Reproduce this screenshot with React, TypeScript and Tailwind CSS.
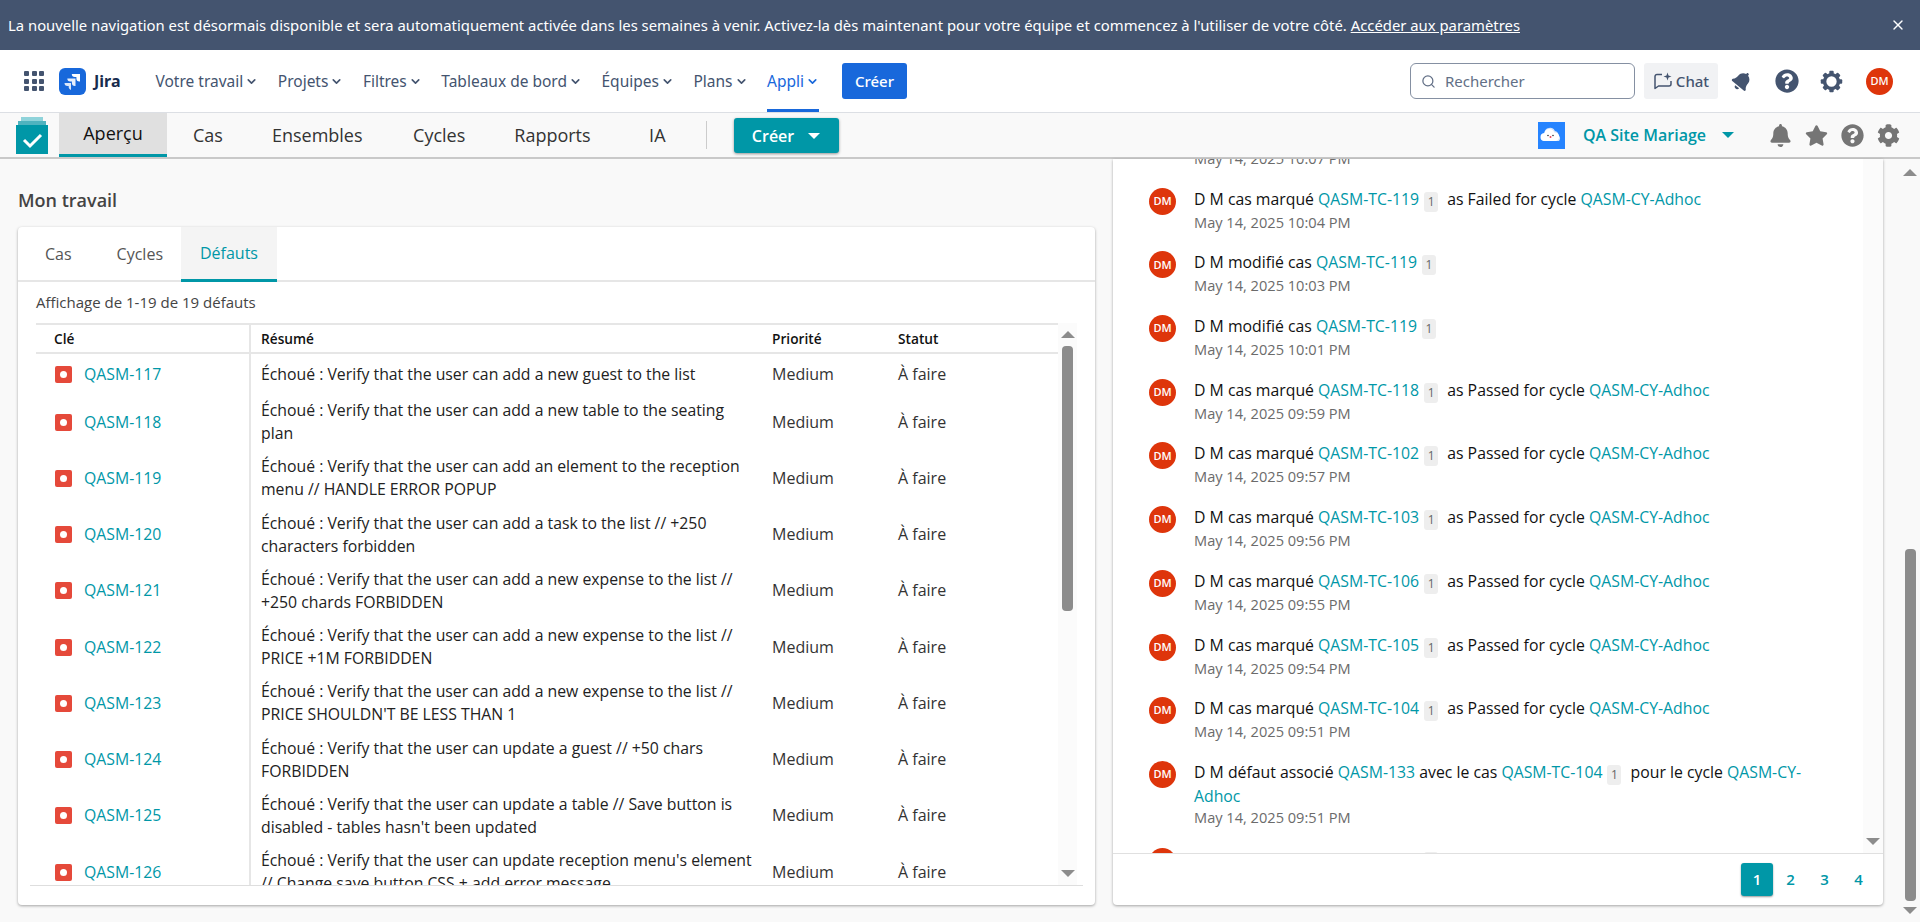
import { ChevronDown, Search, X } from "lucide-react";
import { FaBell, FaCog, FaQuestionCircle, FaStar } from "react-icons/fa";

const navItems = ["Votre travail", "Projets", "Filtres", "Tableaux de bord", "Équipes", "Plans"];

const defects = [
  { key: "QASM-117", text: "Échoué : Verify that the user can add a new guest to the list" },
  { key: "QASM-118", text: "Échoué : Verify that the user can add a new table to the seating plan" },
  { key: "QASM-119", text: "Échoué : Verify that the user can add an element to the reception menu // HANDLE ERROR POPUP" },
  { key: "QASM-120", text: "Échoué : Verify that the user can add a task to the list // +250 characters forbidden" },
  { key: "QASM-121", text: "Échoué : Verify that the user can add a new expense to the list // +250 chards FORBIDDEN" },
  { key: "QASM-122", text: "Échoué : Verify that the user can add a new expense to the list // PRICE +1M FORBIDDEN" },
  { key: "QASM-123", text: "Échoué : Verify that the user can add a new expense to the list // PRICE SHOULDN'T BE LESS THAN 1" },
  { key: "QASM-124", text: "Échoué : Verify that the user can update a guest // +50 chars FORBIDDEN" },
  { key: "QASM-125", text: "Échoué : Verify that the user can update a table // Save button is disabled - tables hasn't been updated" },
  { key: "QASM-126", text: "Échoué : Verify that the user can update reception menu's element // Change save button CSS + add error message" },
];

const marked = [
  { tc: "QASM-TC-118", time: "09:59 PM" },
  { tc: "QASM-TC-102", time: "09:57 PM" },
  { tc: "QASM-TC-103", time: "09:56 PM" },
  { tc: "QASM-TC-106", time: "09:55 PM" },
  { tc: "QASM-TC-105", time: "09:54 PM" },
  { tc: "QASM-TC-104", time: "09:51 PM" },
];

function Link({ children }: { children: React.ReactNode }) {
  return <span className="text-[#0097a7] font-medium">{children}</span>;
}

function Badge() {
  return (
    <span className="inline-block w-[14px] h-[20px] mx-[5px] rounded-[3px] bg-[#eeeeee] text-center text-[12px] leading-[20px] text-[#666] align-[-1px]">
      1
    </span>
  );
}

function Activity({ children, time, height = "h-[63.7px]" }: { children: React.ReactNode; time: string; height?: string }) {
  return (
    <div className={`flex ${height} shrink-0`}>
      <div className="flex h-[27px] w-[27px] shrink-0 items-center justify-center rounded-full bg-[#de350b] text-[11px] font-semibold text-white">
        DM
      </div>
      <div className="ml-[18px] flex-1">
        <div className="text-[15.8px] leading-[22px] text-[#111]">{children}</div>
        <div className="text-[14.6px] leading-[21px] text-[#6b6b6b]">May 14, 2025 {time}</div>
      </div>
    </div>
  );
}

function JiraLogo() {
  return (
    <svg width="27" height="27" viewBox="0 0 27 27">
      <rect width="27" height="27" rx="6" fill="#1868db" />
      <path d="M21 6h-8.2a3 3 0 0 0 3 3h1.6v1.6a3 3 0 0 0 3 3h.6z" fill="#fff" />
      <path d="M16.5 10.5H8.3a3 3 0 0 0 3 3h1.6v1.6a3 3 0 0 0 3 3h.6z" fill="#fff" opacity=".9" />
      <path d="M12 15H5.5a3 3 0 0 0 3 3h1.2v1.6a3 3 0 0 0 2.3 2.4z" fill="#fff" opacity=".85" />
    </svg>
  );
}

function ChatIcon() {
  return (
    <svg width="20" height="20" viewBox="0 0 20 20" fill="none" stroke="#44546f" strokeWidth="1.5">
      <path d="M9 3.5H4a2 2 0 0 0-2 2v12l3.5-2.5H16a2 2 0 0 0 2-2V10" strokeLinejoin="round" />
      <path d="M14.5 1.5l1 3 3 1-3 1-1 3-1-3-3-1 3-1z" fill="#44546f" stroke="none" />
    </svg>
  );
}

function GearIcon() {
  return (
    <svg width="23" height="23" viewBox="0 0 24 24" className="ml-[21px]">
      <circle cx="12" cy="12" r="7.2" fill="none" stroke="#44546f" strokeWidth="3.6" />
      {[0, 45, 90, 135, 180, 225, 270, 315].map((a) => (
        <rect key={a} x="9.7" y="0.8" width="4.6" height="4.6" rx="1" fill="#44546f" transform={`rotate(${a} 12 12)`} />
      ))}
    </svg>
  );
}

function CloudLogo() {
  return (
    <svg width="27" height="27" viewBox="0 0 27 27">
      <rect width="27" height="27" fill="#2684ff" />
      <path d="M7 19a4 4 0 0 1-.6-7.9 5.5 5.5 0 0 1 10.5-2 4.6 4.6 0 0 1 3.6 4.4A3.9 3.9 0 0 1 21 19z" fill="#d6e6fb" />
      <path d="M6.5 19a3.9 3.9 0 0 1-.2-7.8 5.2 5.2 0 0 1 10-.6 4.2 4.2 0 0 1 1.4 8.4z" fill="#fff" />
      <circle cx="10" cy="13.5" r=".8" fill="#333" />
      <circle cx="15" cy="13.5" r=".8" fill="#333" />
      <circle cx="12.5" cy="15" r="1" fill="#f0435a" />
    </svg>
  );
}

function QaLogo() {
  return (
    <svg width="32" height="37" viewBox="0 0 32 37">
      <rect x="5" y="0" width="22" height="4" fill="#8fd3da" />
      <rect x="2" y="4" width="28" height="4" fill="#4fb3bf" />
      <rect x="0" y="8" width="32" height="29" fill="#0097a7" />
      <path d="M8 23l6 6 11-11" fill="none" stroke="#fff" strokeWidth="3" />
    </svg>
  );
}

function ScrollArrow({ up }: { up?: boolean }) {
  return up ? (
    <div className="h-0 w-0 border-x-[7px] border-b-[7px] border-x-transparent border-b-[#8c8c8c]" />
  ) : (
    <div className="h-0 w-0 border-x-[7px] border-t-[7px] border-x-transparent border-t-[#8c8c8c]" />
  );
}

export default function App() {
  return (
    <div className="flex h-[922px] w-full flex-col overflow-hidden bg-[#f9f9f9] font-['Open_Sans',sans-serif]">
      {/* banner */}
      <div className="flex h-[50px] shrink-0 items-center justify-between bg-[#44546f] pl-[8px] pr-[14px] font-['Noto_Sans',sans-serif] text-[14.85px] text-white">
        <div>
          La nouvelle navigation est désormais disponible et sera automatiquement activée dans les semaines à venir. Activez-la dès maintenant pour votre équipe et commencez à l'utiliser de votre côté.{" "}
          <span className="underline">Accéder aux paramètres</span>
        </div>
        <X size={16} />
      </div>

      {/* jira nav */}
      <div className="flex h-[63px] shrink-0 items-center border-b border-[#dcdfe4] bg-white pl-[24px] pr-[27px] font-['Noto_Sans',sans-serif] text-[15.5px] text-[#44546f]">
        <div className="grid grid-cols-3 gap-[2.5px]">
          {Array.from({ length: 9 }).map((_, i) => (
            <div key={i} className="h-[5px] w-[5px] rounded-[1px] bg-[#44546f]" />
          ))}
        </div>
        <div className="ml-[15px]">
          <JiraLogo />
        </div>
        <span className="ml-[8px] text-[16px] font-bold text-[#172b4d]">Jira</span>
        <div className="ml-[35px] flex h-full items-center gap-[19.5px] pt-[1px]">
          {navItems.map((item) => (
            <div key={item} className="flex items-center gap-[2px]">
              {item}
              <ChevronDown size={13} strokeWidth={3} />
            </div>
          ))}
          <div className="flex h-full items-center gap-[2px] border-b-[3px] border-[#1868db] pt-[3px] text-[#1868db]">
            Appli
            <ChevronDown size={13} strokeWidth={3} />
          </div>
        </div>
        <button className="ml-[23px] h-[36px] w-[65px] rounded-[3px] bg-[#1868db] text-[15px] font-medium text-white">Créer</button>
        <div className="ml-auto flex h-[36px] w-[225px] items-center rounded-[6px] border border-[#8590a2] pl-[10px] text-[15px] text-[#626f86]">
          <Search size={15} />
          <span className="ml-[9px]">Rechercher</span>
        </div>
        <div className="ml-[9px] flex h-[36px] w-[74px] items-center justify-center gap-[3px] rounded-[3px] bg-[#f1f2f4] text-[15px] font-medium">
          <ChatIcon />
          Chat
        </div>
        <FaBell size={20} className="ml-[14px] rotate-[40deg]" />
        <FaQuestionCircle size={24} className="ml-[23px]" />
        <GearIcon />
        <div className="ml-[23px] flex h-[27px] w-[27px] items-center justify-center rounded-full bg-[#de350b] text-[11px] font-medium text-white">
          DM
        </div>
      </div>

      {/* app nav */}
      <div className="flex h-[46px] shrink-0 items-center border-b-2 border-[#c9c9c9] bg-[#f9f9f9] pl-[16px] pr-[20px] text-[18px] text-[#333]">
        <QaLogo />
        <div className="ml-[11px] flex h-full w-[108px] items-center justify-center border-b-[3px] border-[#0097a7] bg-[#e0e0e0] font-medium text-[#111]">
          Aperçu
        </div>
        <div className="ml-[26px] flex items-center font-medium">
          <span>Cas</span>
          <span className="ml-[49px]">Ensembles</span>
          <span className="ml-[50.5px]">Cycles</span>
          <span className="ml-[49px]">Rapports</span>
          <span className="ml-[58.5px]">IA</span>
        </div>
        <div className="ml-[40px] h-[28px] w-px bg-[#ccc]" />
        <button className="ml-[27px] mt-[1px] flex h-[35px] w-[105px] items-center justify-center gap-[14px] rounded-[3px] bg-[#0097a7] text-[16px] font-semibold text-white shadow-[0_1px_3px_rgba(0,0,0,0.4)]">
          Créer
          <span className="h-0 w-0 border-x-[6px] border-t-[6px] border-x-transparent border-t-white" />
        </button>
        <div className="ml-auto">
          <CloudLogo />
        </div>
        <span className="ml-[18px] text-[16px] font-semibold text-[#0097a7]">QA Site Mariage</span>
        <span className="ml-[15.5px] h-0 w-0 border-x-[6px] border-t-[6px] border-x-transparent border-t-[#0097a7]" />
        <FaBell size={23} className="ml-[35.5px] text-[#757575]" />
        <FaStar size={23} className="ml-[13px] text-[#757575]" />
        <FaQuestionCircle size={23} className="ml-[13px] text-[#757575]" />
        <FaCog size={23} className="ml-[13px] text-[#757575]" />
      </div>

      {/* content */}
      <div className="flex min-h-0 flex-1">
        <div className="flex w-[1113px] shrink-0 flex-col pb-[17px] pl-[18px] pr-[18px]">
          <h2 className="mt-[29px] text-[18px] font-semibold leading-[24px] text-[#444]">Mon travail</h2>
          <div className="mt-[15px] flex min-h-0 flex-1 flex-col rounded-[4px] bg-white shadow-[0_1px_3px_rgba(0,0,0,0.35)]">
            <div className="flex h-[55px] shrink-0 border-b-2 border-[#e6e6e6] text-[16px] text-[#555]">
              <div className="flex items-center pl-[27px]">Cas</div>
              <div className="flex items-center pl-[45px]">Cycles</div>
              <div className="ml-[18px] flex w-[96px] items-center justify-center border-b-[3px] border-[#0097a7] bg-[#f4f4f4] font-medium text-[#0097a7] -mb-[2px]">
                Défauts
              </div>
            </div>
            <div className="flex h-[41px] shrink-0 items-center pl-[18px] text-[15px] text-[#444]">Affichage de 1-19 de 19 défauts</div>
            <div className="flex min-h-0 flex-1 pl-[18px] pr-[18px]">
              <div className="flex min-w-0 w-[1022px] flex-col overflow-hidden">
                <div className="grid h-[31px] shrink-0 grid-cols-[215px_511px_136px_1fr] items-center border-y-2 border-[#e6e6e6] text-[13.7px] font-semibold text-[#111]">
                  <div className="flex h-full items-center border-r-2 border-[#e6e6e6] pl-[18px] pt-[1px]">Clé</div>
                  <div className="pl-[10px] pt-[1px]">Résumé</div>
                  <div className="pl-[10px] pt-[1px]">Priorité</div>
                  <div className="pt-[1px]">Statut</div>
                </div>
                <div className="min-h-0 flex-1 overflow-hidden">
                  {defects.map((d, i) => (
                    <div
                      key={d.key}
                      className={`grid grid-cols-[215px_511px_136px_1fr] items-center text-[16px] leading-[23px] ${i === 0 ? "h-[40px]" : "h-[56.25px]"}`}
                    >
                      <div className="flex h-full items-center border-r-2 border-[#e6e6e6] pl-[19px]">
                        <span className="flex h-[17px] w-[17px] items-center justify-center rounded-[2px] bg-[#e5493a]">
                          <span className="h-[7px] w-[7px] rounded-full bg-white" />
                        </span>
                        <span className="ml-[12px] text-[15.8px] font-medium text-[#0097a7]">{d.key}</span>
                      </div>
                      <div className="pl-[10px] pr-[6px] text-[15.8px] text-[#222]">{d.text}</div>
                      <div className="pl-[10px] text-[#333]">Medium</div>
                      <div className="text-[#333]">À faire</div>
                    </div>
                  ))}
                </div>
              </div>
              <div className="flex w-[19px] shrink-0 flex-col items-center bg-[#fbfbfb] pb-[8px] pt-[8px]">
                <ScrollArrow up />
                <div className="mt-[8px] h-[265px] w-[11px] rounded-[4px] bg-[#8c8c8c]" />
                <div className="mt-auto">
                  <ScrollArrow />
                </div>
              </div>
            </div>
            <div className="mx-[12px] mb-[19px] h-px shrink-0 bg-[#dedede]" />
          </div>
        </div>

        <div className="mb-[17px] flex w-[770px] shrink-0 flex-col rounded-b-[4px] bg-white shadow-[0_1px_3px_rgba(0,0,0,0.35)]">
          <div className="flex min-h-0 flex-1">
            <div className="min-w-0 flex-1 overflow-hidden pl-[36px] pr-[30px]">
              <div className="-mt-[35px] flex flex-col">
                <Activity time="10:07 PM">
                  D M modifié cas <Link>QASM-TC-119</Link>
                  <Badge />
                </Activity>
                <Activity time="10:04 PM">
                  D M cas marqué <Link>QASM-TC-119</Link>
                  <Badge /> as Failed for cycle <Link>QASM-CY-Adhoc</Link>
                </Activity>
                <Activity time="10:03 PM">
                  D M modifié cas <Link>QASM-TC-119</Link>
                  <Badge />
                </Activity>
                <Activity time="10:01 PM">
                  D M modifié cas <Link>QASM-TC-119</Link>
                  <Badge />
                </Activity>
                {marked.map((m) => (
                  <Activity key={m.tc} time={m.time}>
                    D M cas marqué <Link>{m.tc}</Link>
                    <Badge /> as Passed for cycle <Link>QASM-CY-Adhoc</Link>
                  </Activity>
                ))}
                <Activity time="09:51 PM" height="h-[87px]">
                  D M défaut associé <Link>QASM-133</Link> avec le cas <Link>QASM-TC-104</Link>
                  <Badge /> pour le cycle <Link>QASM-CY-Adhoc</Link>
                </Activity>
                <Activity time="09:50 PM">
                  D M cas marqué <Link>QASM-TC-104</Link>
                  <Badge /> as Failed for cycle <Link>QASM-CY-Adhoc</Link>
                </Activity>
              </div>
            </div>
            <div className="flex w-[20px] shrink-0 flex-col items-center justify-end bg-[#fbfbfb] pb-[8px]">
              <ScrollArrow />
            </div>
          </div>
          <div className="flex h-[52px] shrink-0 items-center justify-end gap-[1px] border-t border-[#e0e0e0] pr-[8px] text-[15px] font-semibold text-[#0097a7]">
            <span className="flex h-[33px] w-[32px] items-center justify-center rounded-[3px] bg-[#0097a7] text-white shadow-[0_1px_2px_rgba(0,0,0,0.4)]">1</span>
            <span className="flex h-[33px] w-[33px] items-center justify-center">2</span>
            <span className="flex h-[33px] w-[33px] items-center justify-center">3</span>
            <span className="flex h-[33px] w-[33px] items-center justify-center">4</span>
          </div>
        </div>

        <div className="ml-auto flex w-[20px] shrink-0 flex-col items-center pb-[8px] pt-[10px]">
          <ScrollArrow up />
          <div className="mt-auto h-[352px] w-[11px] rounded-[4px] bg-[#8c8c8c]" />
          <div className="mt-[6px]">
            <ScrollArrow />
          </div>
        </div>
      </div>
    </div>
  );
}
